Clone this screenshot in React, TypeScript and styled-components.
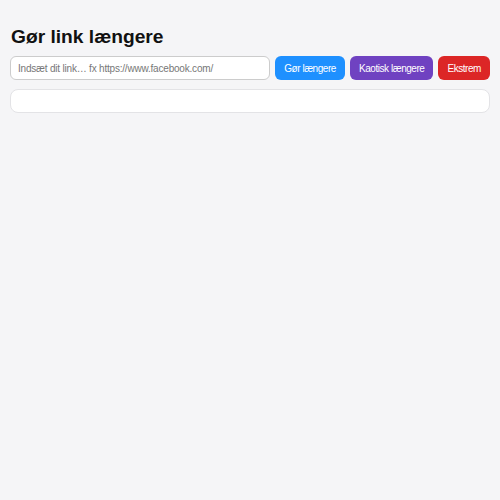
import styled, { createGlobalStyle } from 'styled-components';

const GlobalStyle = createGlobalStyle`
  html, body {
    margin: 0;
    background: #f5f5f7;
  }
  body {
    padding: 10px;
    font-family: 'Liberation Sans', Arial, sans-serif;
    color: #111;
  }
`;

const Title = styled.h1`
  font-size: 19.2px;
  font-weight: bold;
  margin: 16px 0 8px 1px;
`;

const Row = styled.div`
  display: flex;
  gap: 5px;
  align-items: stretch;
  height: 24px;
`;

const LinkInput = styled.input`
  flex: 1;
  min-width: 0;
  box-sizing: border-box;
  border: 1px solid #ccc;
  border-radius: 6px;
  background: #fff;
  padding: 0 7px;
  font-family: inherit;
  font-size: 10px;
  letter-spacing: -0.2px;
  outline: none;

  &::placeholder {
    color: #777;
  }
`;

const ActionButton = styled.button<{ $bg: string }>`
  border: none;
  border-radius: 6px;
  background: ${(p) => p.$bg};
  color: #fff;
  padding: 0 9px;
  font-family: inherit;
  font-size: 10px;
  letter-spacing: -0.45px;
  cursor: pointer;
  white-space: nowrap;
`;

const Result = styled.div`
  margin-top: 9px;
  height: 24px;
  box-sizing: border-box;
  background: #fff;
  border: 1px solid #e3e3e6;
  border-radius: 8px;
`;

const App = () => {
  return (
    <>
      <GlobalStyle />
      <Title>Gør link længere</Title>
      <Row>
        <LinkInput placeholder="Indsæt dit link… fx https://www.facebook.com/" />
        <ActionButton $bg="#1e90ff">Gør længere</ActionButton>
        <ActionButton $bg="#6f42c1">Kaotisk længere</ActionButton>
        <ActionButton $bg="#dc2626">Ekstrem</ActionButton>
      </Row>
      <Result />
    </>
  );
};

export default App;
